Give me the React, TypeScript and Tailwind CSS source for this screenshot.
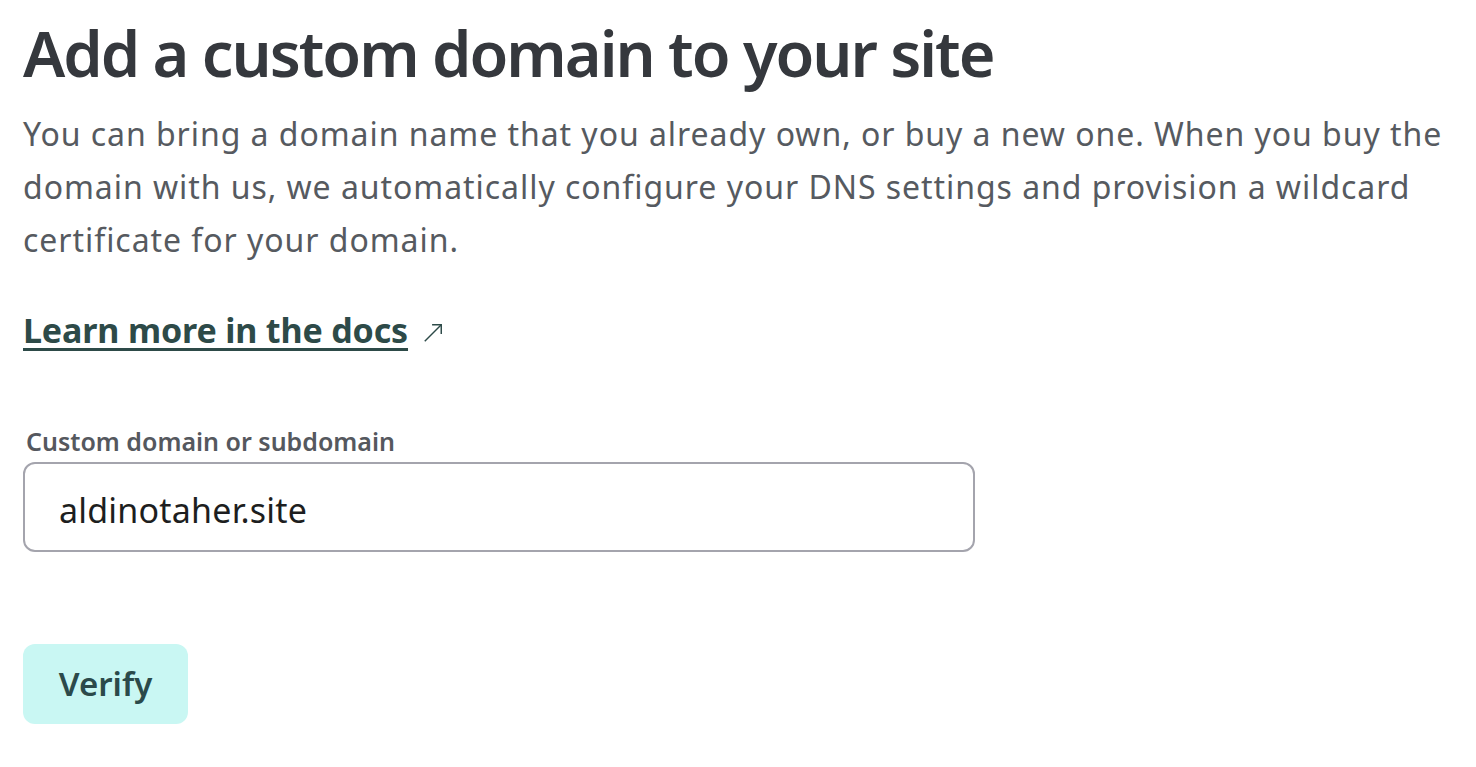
import React from "react"

export default function App() {
  return (
    <div
      className="min-h-screen bg-white px-[23px] pt-[15px]"
      style={{ fontFamily: "'Noto Sans', 'Open Sans', sans-serif" }}
    >
      {/* heading */}
      <h1 className="whitespace-nowrap text-[63px] font-semibold leading-[76px] tracking-[-2px] text-[#35383d]">
        Add a custom domain to your site
      </h1>

      {/* intro */}
      <p className="mt-[16px] whitespace-nowrap text-[32px] leading-[53px] tracking-[0.95px] text-[#565a60]">
        You can bring a domain name that you already own, or buy a new one. When you buy the
        <br />
        domain with us, we automatically configure your DNS settings and provision a wildcard
        <br />
        certificate for your domain.
      </p>

      {/* docs link */}
      <a
        href="#"
        className="mt-[39px] inline-flex items-center gap-[14px] text-[#2d4a48]"
      >
        <span className="text-[34px] font-bold tracking-[-0.15px] underline decoration-[3px] underline-offset-[5px]">
          Learn more in the docs
        </span>
        <svg width="22" height="22" viewBox="0 0 24 24" fill="none" stroke="currentColor" strokeWidth="1.6" className="mt-[4px]">
          <path d="M3 21 L21 3" />
          <path d="M11 3 H21 V13" />
        </svg>
      </a>

      {/* form */}
      <div className="mt-[70px] w-[952px]">
        <label className="block pl-[3px] text-[25px] font-semibold leading-[30px] text-[#55585e]">
          Custom domain or subdomain
        </label>
        <div className="mt-[6px] flex h-[90px] items-center rounded-[12px] border-2 border-[#a4a4ad] px-[34px] pt-[6px]">
          <span className="text-[34px] tracking-[0.2px] text-[#1d1e20]">aldinotaher.site</span>
        </div>
      </div>

      <button className="mt-[92px] flex h-[80px] w-[165px] items-center justify-center rounded-[12px] bg-[#c9f7f3] text-[33px] font-semibold text-[#2b4a4a]">
        Verify
      </button>
    </div>
  )
}
